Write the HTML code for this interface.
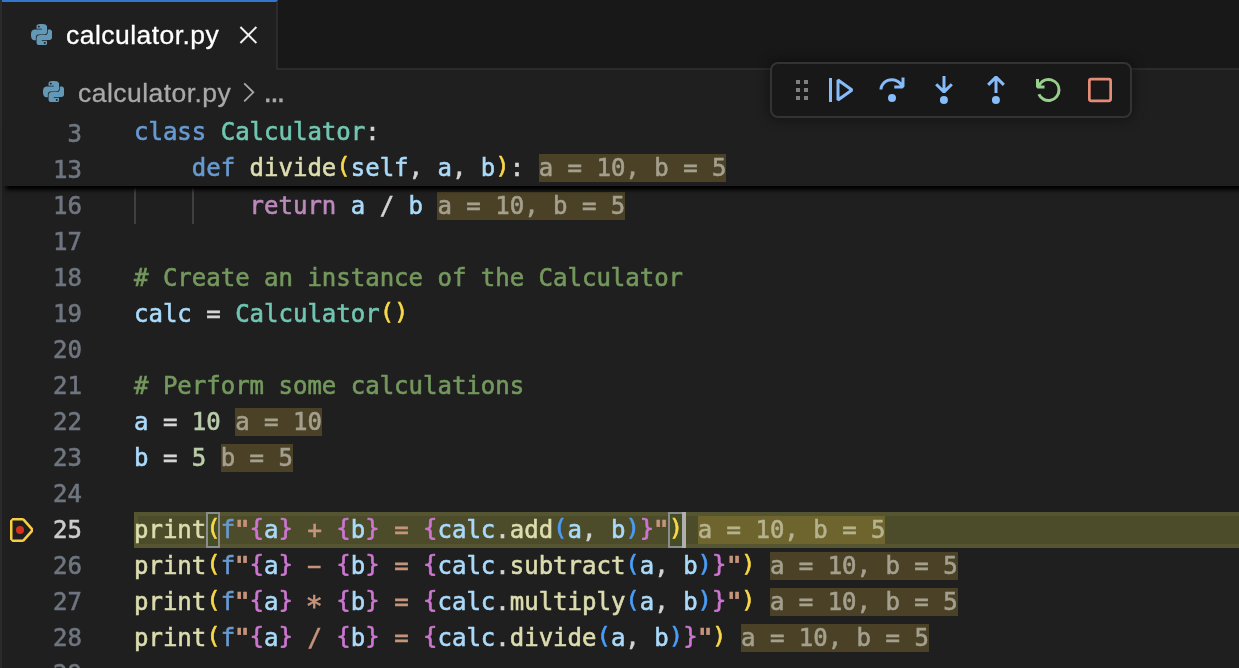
<!DOCTYPE html>
<html lang="en">
<head>
<meta charset="utf-8">
<title>calculator.py</title>
<style>
html,body{margin:0;padding:0;}
body{width:1239px;height:668px;overflow:hidden;background:#1f1f1f;position:relative;font-family:"Liberation Sans",sans-serif;}
.abs{position:absolute;}
#root{position:absolute;left:0;top:0;width:1239px;height:668px;overflow:hidden;will-change:transform;}
#leftstrip{left:0;top:0;width:2px;height:668px;background:#2b2b2b;}
#tabbar{left:2px;top:0;width:1237px;height:70px;background:#181818;border-bottom:2px solid #2b2b2b;box-sizing:border-box;}
#tab{left:2px;top:0;width:276px;height:70px;background:#1f1f1f;border-right:2px solid #2b2b2b;border-top:2px solid #3376cd;box-sizing:border-box;}
.uitext{font-size:26.5px;line-height:30px;white-space:pre;letter-spacing:0.46px;-webkit-text-stroke:0.3px;}
#tabtext{left:66px;top:20px;color:#ffffff;}
#bctext{left:78px;top:78px;color:#a9a9a9;}
#bcdots{left:263.3px;top:73.3px;color:#a9a9a9;font-size:32px;letter-spacing:-2.3px;line-height:36px;}
.mono{font-family:"DejaVu Sans Mono","Liberation Mono",monospace;font-size:24px;line-height:36px;white-space:pre;letter-spacing:0;-webkit-text-stroke:0.6px;}
.ln{left:0;width:82px;text-align:right;color:#6f7680;height:36px;}
.ln.act{color:#cccccc;}
.cl{left:134px;height:36px;color:#cccccc;}
.k{color:#679ad1}.c{color:#71c6b1}.f{color:#dcdcaf}.v{color:#aadafa}.r{color:#bc89bd}.m{color:#74985d}.n{color:#bacdab}.s{color:#c5947c}.o{color:#d4d4d4}
.gq{display:inline-block;transform:scaleX(1.3);}
.gh{display:inline-block;transform:scaleX(1.9);}
.ga{display:inline-block;transform:translateY(4.4px) scale(1.2);}
.b1,.b2,.b3{display:inline-block;transform-origin:50% 6px;transform:translateY(-0.5px) scaleY(0.935);}
.b1{color:#f9d849}.b2{color:#cc76d1}.b3{color:#4a9df8}
.iv{background:#4b4127;color:#a4a08e;}
.ivh{background:#6e652e;color:#b6b28e;}
#sticky{left:2px;top:114px;width:1300px;height:72px;background:#1f1f1f;box-shadow:0 8px 4px -4px #000;}
#hl{left:134px;top:512px;width:1109px;height:36px;box-sizing:border-box;background:#4c4c2a;border:4px solid #555531;border-right:0;}
#toolbar{left:770px;top:62px;width:362px;height:56px;box-sizing:border-box;background:#181818;border:2px solid #333333;border-radius:8px;box-shadow:0 0 12px 2px rgba(0,0,0,0.36);}
.guide{width:2px;background:#404040;top:188px;height:36px;}
</style>
</head>
<body>
<div id="root">
<div id="leftstrip" class="abs"></div>
<div id="tabbar" class="abs"></div>
<div id="tab" class="abs"></div>
<div id="tabtext" class="abs uitext">calculator.py</div>
<div id="bctext" class="abs uitext">calculator.py</div>
<div id="bcdots" class="abs uitext">...</div>


<svg class="abs" style="left:30.8px;top:23.6px" width="21.6" height="21.6" viewBox="0 0 24 24"><path fill="#6398b7" d="M14.25.18l.9.2.73.26.59.3.45.32.34.34.25.34.16.33.1.3.04.26.02.2-.01.13V8.5l-.05.63-.13.55-.21.46-.26.38-.3.31-.33.25-.35.19-.35.14-.33.1-.3.07-.26.04-.21.02H8.77l-.69.05-.59.14-.5.22-.41.27-.33.32-.27.35-.2.36-.15.37-.1.35-.07.32-.04.27-.02.21v3.06H3.17l-.21-.03-.28-.07-.32-.12-.35-.18-.36-.26-.36-.36-.35-.46-.32-.59-.28-.73-.21-.88-.14-1.05-.05-1.23.06-1.22.16-1.04.24-.87.32-.71.36-.57.4-.44.42-.33.42-.24.4-.16.36-.1.32-.05.24-.01h.16l.06.01h8.16v-.83H6.18l-.01-2.75-.02-.37.05-.34.11-.31.17-.28.25-.26.31-.23.38-.2.44-.18.51-.15.58-.12.64-.1.71-.06.77-.04.84-.02 1.27.05zm-6.3 1.98l-.23.33-.08.41.08.41.23.34.33.22.41.09.41-.09.33-.22.23-.34.08-.41-.08-.41-.23-.33-.33-.22-.41-.09-.41.09zm13.09 3.95l.28.06.32.12.35.18.36.27.36.35.35.47.32.59.28.73.21.88.14 1.04.05 1.23-.06 1.23-.16 1.04-.24.86-.32.71-.36.57-.4.45-.42.33-.42.24-.4.16-.36.09-.32.05-.24.02-.16-.01h-8.22v.82h5.84l.01 2.76.02.36-.05.34-.11.31-.17.29-.25.25-.31.24-.38.2-.44.17-.51.15-.58.13-.64.09-.71.07-.77.04-.84.01-1.27-.04-1.07-.14-.9-.2-.73-.25-.59-.3-.45-.33-.34-.34-.25-.34-.16-.33-.1-.3-.04-.25-.02-.2.01-.13v-5.34l.05-.64.13-.54.21-.46.26-.38.3-.32.33-.24.35-.2.35-.14.33-.1.3-.06.26-.04.21-.02.13-.01h5.84l.69-.05.59-.14.5-.21.41-.28.33-.32.27-.35.2-.36.15-.36.1-.35.07-.32.04-.28.02-.21V6.07h2.09l.14.01zm-6.47 14.25l-.23.33-.08.41.08.41.23.33.33.23.41.08.41-.08.33-.23.23-.33.08-.41-.08-.41-.23-.33-.33-.23-.41-.08-.41.08z"/></svg>
<svg class="abs" style="left:42.9px;top:80.8px" width="21.6" height="21.6" viewBox="0 0 24 24"><path fill="#6398b7" d="M14.25.18l.9.2.73.26.59.3.45.32.34.34.25.34.16.33.1.3.04.26.02.2-.01.13V8.5l-.05.63-.13.55-.21.46-.26.38-.3.31-.33.25-.35.19-.35.14-.33.1-.3.07-.26.04-.21.02H8.77l-.69.05-.59.14-.5.22-.41.27-.33.32-.27.35-.2.36-.15.37-.1.35-.07.32-.04.27-.02.21v3.06H3.17l-.21-.03-.28-.07-.32-.12-.35-.18-.36-.26-.36-.36-.35-.46-.32-.59-.28-.73-.21-.88-.14-1.05-.05-1.23.06-1.22.16-1.04.24-.87.32-.71.36-.57.4-.44.42-.33.42-.24.4-.16.36-.1.32-.05.24-.01h.16l.06.01h8.16v-.83H6.18l-.01-2.75-.02-.37.05-.34.11-.31.17-.28.25-.26.31-.23.38-.2.44-.18.51-.15.58-.12.64-.1.71-.06.77-.04.84-.02 1.27.05zm-6.3 1.98l-.23.33-.08.41.08.41.23.34.33.22.41.09.41-.09.33-.22.23-.34.08-.41-.08-.41-.23-.33-.33-.22-.41-.09-.41.09zm13.09 3.95l.28.06.32.12.35.18.36.27.36.35.35.47.32.59.28.73.21.88.14 1.04.05 1.23-.06 1.23-.16 1.04-.24.86-.32.71-.36.57-.4.45-.42.33-.42.24-.4.16-.36.09-.32.05-.24.02-.16-.01h-8.22v.82h5.84l.01 2.76.02.36-.05.34-.11.31-.17.29-.25.25-.31.24-.38.2-.44.17-.51.15-.58.13-.64.09-.71.07-.77.04-.84.01-1.27-.04-1.07-.14-.9-.2-.73-.25-.59-.3-.45-.33-.34-.34-.25-.34-.16-.33-.1-.3-.04-.25-.02-.2.01-.13v-5.34l.05-.64.13-.54.21-.46.26-.38.3-.32.33-.24.35-.2.35-.14.33-.1.3-.06.26-.04.21-.02.13-.01h5.84l.69-.05.59-.14.5-.21.41-.28.33-.32.27-.35.2-.36.15-.36.1-.35.07-.32.04-.28.02-.21V6.07h2.09l.14.01zm-6.47 14.25l-.23.33-.08.41.08.41.23.33.33.23.41.08.41-.08.33-.23.23-.33.08-.41-.08-.41-.23-.33-.33-.23-.41-.08-.41.08z"/></svg>
<svg class="abs" style="left:232px;top:19px" width="32" height="32" viewBox="0 0 32 32"><path d="M8.4 8L24.4 24M24.4 8L8.4 24" stroke="#f0f0f0" stroke-width="2" fill="none"/></svg>
<svg class="abs" style="left:236px;top:76px" width="32" height="32" viewBox="0 0 32 32"><path d="M8.2 7.3L17.3 16.3L8.2 25.3" stroke="#a9a9a9" stroke-width="1.8" fill="none"/></svg>

<div id="editor">
<div class="abs guide" style="left:134px"></div>
<div class="abs guide" style="left:192px"></div>
<div id="hl" class="abs"></div>
<div class="abs mono ln" style="top:188px">16</div>
<div class="abs mono cl" style="top:188px">        <span class="r">return</span> <span class="v">a</span> <span class="o">/</span> <span class="v">b</span> <span class="iv">a = 10, b = 5</span></div>
<div class="abs mono ln" style="top:224px">17</div>
<div class="abs mono ln" style="top:260px">18</div>
<div class="abs mono cl" style="top:260px"><span class="m"># Create an instance of the Calculator</span></div>
<div class="abs mono ln" style="top:296px">19</div>
<div class="abs mono cl" style="top:296px"><span class="v">calc</span> <span class="o">=</span> <span class="c">Calculator</span><span class="b1">()</span></div>
<div class="abs mono ln" style="top:332px">20</div>
<div class="abs mono ln" style="top:368px">21</div>
<div class="abs mono cl" style="top:368px"><span class="m"># Perform some calculations</span></div>
<div class="abs mono ln" style="top:404px">22</div>
<div class="abs mono cl" style="top:404px"><span class="v">a</span> <span class="o">=</span> <span class="n">10</span> <span class="iv">a = 10</span></div>
<div class="abs mono ln" style="top:440px">23</div>
<div class="abs mono cl" style="top:440px"><span class="v">b</span> <span class="o">=</span> <span class="n">5</span> <span class="iv">b = 5</span></div>
<div class="abs mono ln" style="top:476px">24</div>

<svg class="abs" style="left:4px;top:514px" width="32" height="32" viewBox="0 0 16 16"><path fill="#f7ce46" fill-rule="evenodd" d="M14.5 7.15l-4.26-4.74L9.31 2H4.25L3 3.25v9.5L4.25 14h5.06l.93-.42 4.26-4.73V7.15zm-5.19 5.6H4.25v-9.5h5.06L13.5 8l-4.19 4.75z"/><circle cx="8" cy="8" r="2" fill="#d2331f"/></svg>
<div class="abs" style="left:206px;top:512px;width:14px;height:36px;box-sizing:border-box;border:2px solid #8c8c8c;background:#454d27"></div>
<div class="abs" style="left:668px;top:512px;width:16px;height:36px;box-sizing:border-box;border:2px solid #8c8c8c;background:#454d27"></div>
<div class="abs" style="left:682px;top:512px;width:4px;height:36px;background:#afafaf"></div>
<div class="abs mono ln act" style="top:512px">25</div>
<div class="abs mono cl" style="top:512px"><span class="f">print</span><span class="b1">(</span><span class="k">f</span><span class="s gq">"</span><span class="b2">{</span><span class="v">a</span><span class="b2">}</span><span class="s"> + </span><span class="b2">{</span><span class="v">b</span><span class="b2">}</span><span class="s"> = </span><span class="b2">{</span><span class="v">calc</span><span class="o">.</span><span class="f">add</span><span class="b3">(</span><span class="v">a</span><span class="o">,</span> <span class="v">b</span><span class="b3">)</span><span class="b2">}</span><span class="s gq">"</span><span class="b1">)</span> <span class="iv ivh">a = 10, b = 5</span></div>
<div class="abs mono ln" style="top:548px">26</div>
<div class="abs mono cl" style="top:548px"><span class="f">print</span><span class="b1">(</span><span class="k">f</span><span class="s gq">"</span><span class="b2">{</span><span class="v">a</span><span class="b2">}</span><span class="s"> <span class="gh">-</span> </span><span class="b2">{</span><span class="v">b</span><span class="b2">}</span><span class="s"> = </span><span class="b2">{</span><span class="v">calc</span><span class="o">.</span><span class="f">subtract</span><span class="b3">(</span><span class="v">a</span><span class="o">,</span> <span class="v">b</span><span class="b3">)</span><span class="b2">}</span><span class="s gq">"</span><span class="b1">)</span> <span class="iv">a = 10, b = 5</span></div>
<div class="abs mono ln" style="top:584px">27</div>
<div class="abs mono cl" style="top:584px"><span class="f">print</span><span class="b1">(</span><span class="k">f</span><span class="s gq">"</span><span class="b2">{</span><span class="v">a</span><span class="b2">}</span><span class="s"> <span class="ga">*</span> </span><span class="b2">{</span><span class="v">b</span><span class="b2">}</span><span class="s"> = </span><span class="b2">{</span><span class="v">calc</span><span class="o">.</span><span class="f">multiply</span><span class="b3">(</span><span class="v">a</span><span class="o">,</span> <span class="v">b</span><span class="b3">)</span><span class="b2">}</span><span class="s gq">"</span><span class="b1">)</span> <span class="iv">a = 10, b = 5</span></div>
<div class="abs mono ln" style="top:620px">28</div>
<div class="abs mono cl" style="top:620px"><span class="f">print</span><span class="b1">(</span><span class="k">f</span><span class="s gq">"</span><span class="b2">{</span><span class="v">a</span><span class="b2">}</span><span class="s"> / </span><span class="b2">{</span><span class="v">b</span><span class="b2">}</span><span class="s"> = </span><span class="b2">{</span><span class="v">calc</span><span class="o">.</span><span class="f">divide</span><span class="b3">(</span><span class="v">a</span><span class="o">,</span> <span class="v">b</span><span class="b3">)</span><span class="b2">}</span><span class="s gq">"</span><span class="b1">)</span> <span class="iv">a = 10, b = 5</span></div>
<div class="abs mono ln" style="top:656px">29</div>
</div>

<div id="sticky" class="abs"></div>
<div class="abs mono ln" style="top:116px">3</div>
<div class="abs mono cl" style="top:114px"><span class="k">class</span> <span class="c">Calculator</span><span class="o">:</span></div>
<div class="abs mono ln" style="top:152px">13</div>
<div class="abs mono cl" style="top:150px">    <span class="k">def</span> <span class="f">divide</span><span class="b1">(</span><span class="v">self</span><span class="o">,</span> <span class="v">a</span><span class="o">,</span> <span class="v">b</span><span class="b1">)</span><span class="o">:</span> <span class="iv">a = 10, b = 5</span></div>

<div id="toolbar" class="abs"></div>
<svg class="abs" style="left:786px;top:74px" width="32" height="32" viewBox="0 0 16 16"><path fill="#7f7f7f" d="M5 3h2v2H5zm0 4h2v2H5zm0 4h2v2H5zm4-8h2v2H9zm0 4h2v2H9zm0 4h2v2H9z"/></svg>
<svg class="abs" style="left:824px;top:74px" width="32" height="32" viewBox="0 0 16 16"><path fill="#86bcf9" d="M2.5 2H4v12H2.5V2zm4.936.39L6.25 3v10l1.186.61 7-5V7.39l-7-5zM12.7 8l-4.95 3.54V4.46L12.7 8z"/></svg>
<svg class="abs" style="left:876px;top:74px" width="32" height="32" viewBox="0 0 16 16"><path fill="#86bcf9" d="M14.25 5.75v-4h-1.5v2.542c-1.145-1.359-2.911-2.209-4.84-2.209-3.177 0-5.92 2.307-6.16 5.398l-.02.269h1.501l.022-.226c.212-2.195 2.202-3.94 4.656-3.94 1.736 0 3.244.875 4.05 2.166h-2.83v1.5h4.163l.962-.975V5.75h-.004zM8 14a2 2 0 1 0 0-4 2 2 0 0 0 0 4z"/></svg>
<svg class="abs" style="left:928px;top:74px" width="32" height="32" viewBox="0 0 16 16"><path fill="#86bcf9" d="M8 9.532h.542l3.905-3.905-1.061-1.06-2.637 2.61V1H7.251v6.177l-2.637-2.61-1.061 1.06 3.905 3.905H8zm1.956 3.481a2 2 0 1 1-4 0 2 2 0 0 1 4 0z"/></svg>
<svg class="abs" style="left:980px;top:74px" width="32" height="32" viewBox="0 0 16 16"><path fill="#86bcf9" d="M8 1h-.542L3.553 4.905l1.061 1.06 2.637-2.61v6.177h1.498V3.355l2.637 2.61 1.061-1.06L8.542 1H8zm1.956 12.013a2 2 0 1 1-4 0 2 2 0 0 1 4 0z"/></svg>
<svg class="abs" style="left:1032px;top:74px" width="32" height="32" viewBox="0 0 16 16"><path fill="#99cf8c" d="M12.75 8a4.5 4.5 0 0 1-8.61 1.834l-1.391.565A6.001 6.001 0 0 0 14.25 8 6 6 0 0 0 3.500 4.334V2.500H2.000v4l.75.75h3.500v-1.500H4.352A4.500 4.500 0 0 1 12.750 8z"/></svg>
<svg class="abs" style="left:1084px;top:74px" width="32" height="32" viewBox="0 0 32 32"><rect x="5.35" y="5.2" width="21.3" height="21.6" rx="1.8" fill="none" stroke="#e58c77" stroke-width="2.7"/></svg>

</div>
</body>
</html>
